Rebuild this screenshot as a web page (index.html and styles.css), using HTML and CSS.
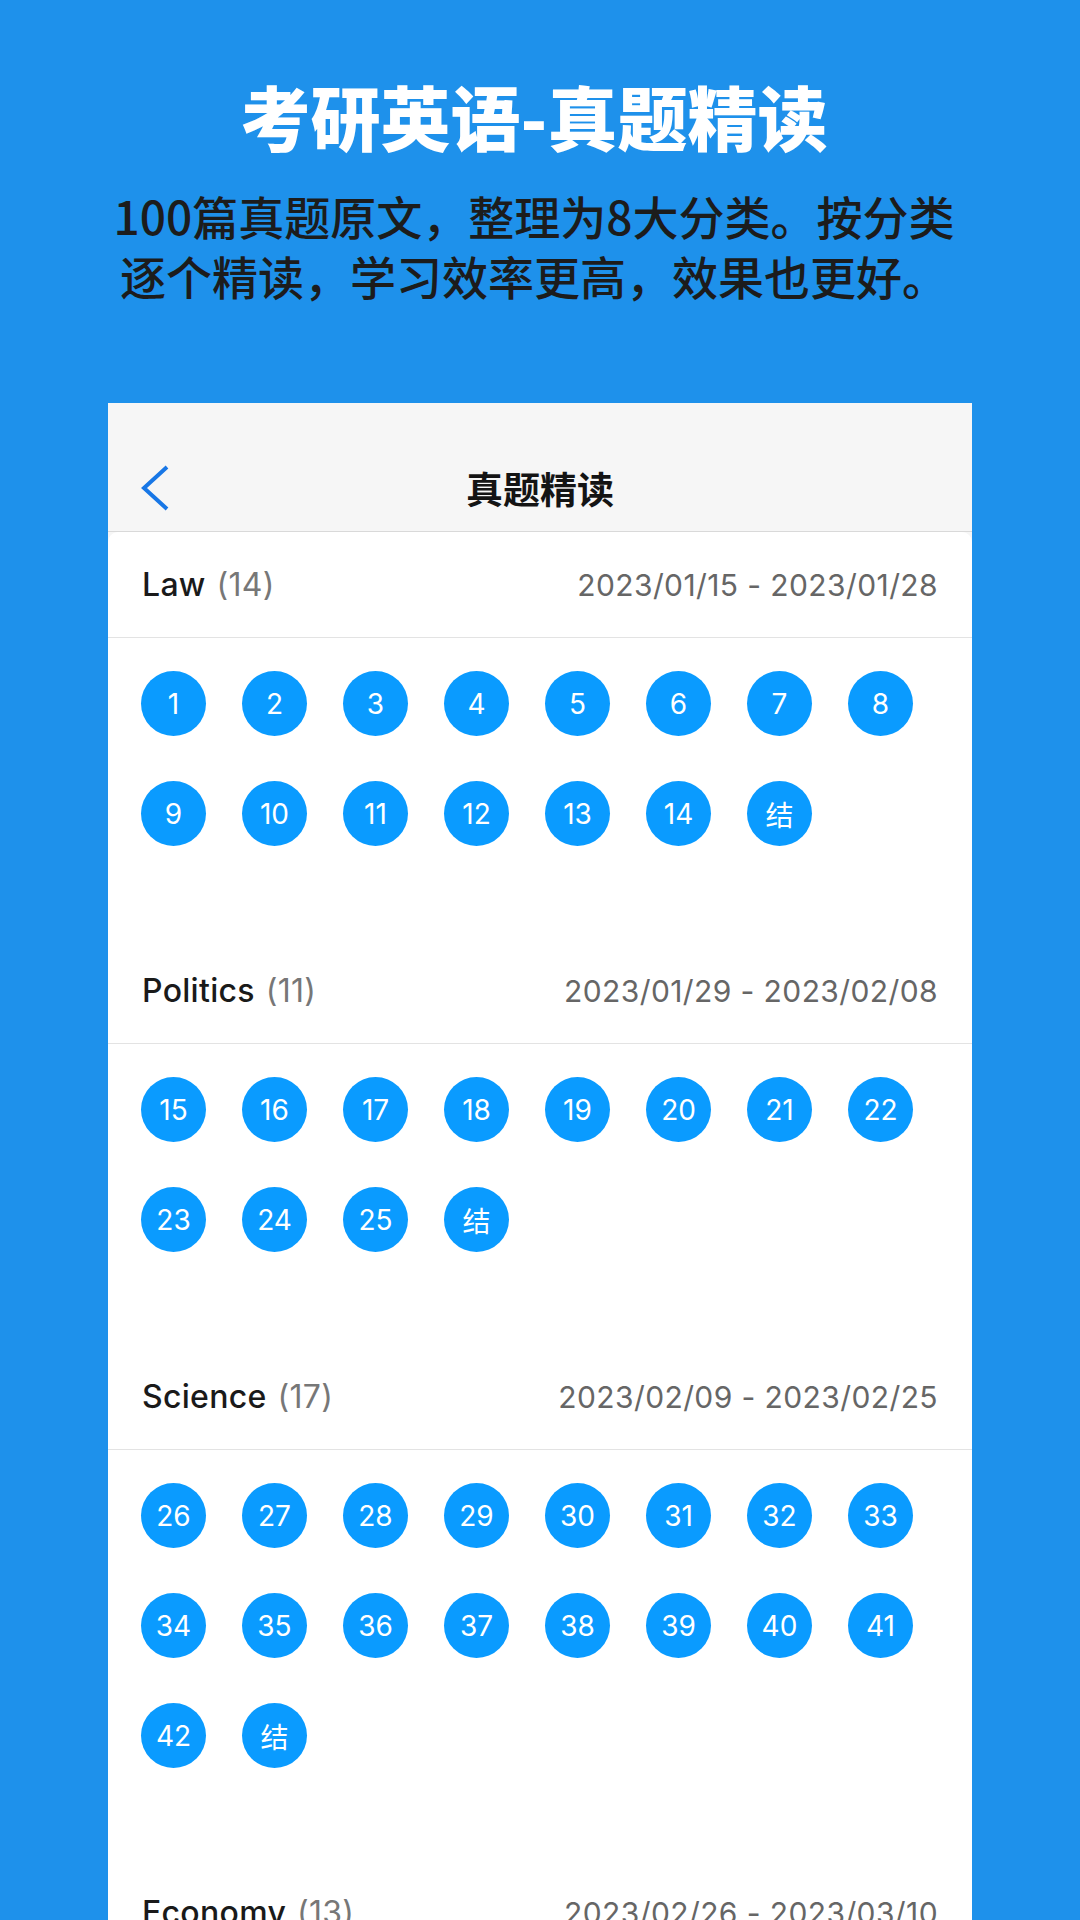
FILE: index.html
```html
<!DOCTYPE html>
<html lang="zh-CN">
<head>
<meta charset="UTF-8">
<title>考研英语-真题精读</title>
<meta name="viewport" content="width=device-width,initial-scale=1">
<link rel="stylesheet" href="styles.css">
</head>
<body>

<header class="promo">
  <h1 class="promo-title">考研英语-真题精读</h1>
  <p class="promo-desc">100篇真题原文，整理为8大分类。按分类<br>逐个精读，学习效率更高，效果也更好。</p>
</header>

<div class="phone">
  <div class="nav">
    <div class="status"></div>
    <div class="nav-bar">
      <svg class="back" width="28" height="46" viewBox="0 0 28 46">
        <polyline points="26,2 3,23 26,44" fill="none" stroke="#1877e6" stroke-width="4"/>
      </svg>
      <span class="nav-title">真题精读</span>
      <span></span>
    </div>
  </div>

  <div class="list">
    <section class="cat">
      <div class="cat-head">
        <span class="cat-name">Law <em>(14)</em></span>
        <span class="cat-date">2023/01/15 - 2023/01/28</span>
      </div>
      <div class="cat-grid">
        <a class="num">1</a><a class="num">2</a><a class="num">3</a><a class="num">4</a>
        <a class="num">5</a><a class="num">6</a><a class="num">7</a><a class="num">8</a>
        <a class="num">9</a><a class="num">10</a><a class="num">11</a><a class="num">12</a>
        <a class="num">13</a><a class="num">14</a><a class="num">结</a>
      </div>
    </section>

    <section class="cat">
      <div class="cat-head">
        <span class="cat-name">Politics <em>(11)</em></span>
        <span class="cat-date">2023/01/29 - 2023/02/08</span>
      </div>
      <div class="cat-grid">
        <a class="num">15</a><a class="num">16</a><a class="num">17</a><a class="num">18</a>
        <a class="num">19</a><a class="num">20</a><a class="num">21</a><a class="num">22</a>
        <a class="num">23</a><a class="num">24</a><a class="num">25</a><a class="num">结</a>
      </div>
    </section>

    <section class="cat">
      <div class="cat-head">
        <span class="cat-name">Science <em>(17)</em></span>
        <span class="cat-date">2023/02/09 - 2023/02/25</span>
      </div>
      <div class="cat-grid">
        <a class="num">26</a><a class="num">27</a><a class="num">28</a><a class="num">29</a>
        <a class="num">30</a><a class="num">31</a><a class="num">32</a><a class="num">33</a>
        <a class="num">34</a><a class="num">35</a><a class="num">36</a><a class="num">37</a>
        <a class="num">38</a><a class="num">39</a><a class="num">40</a><a class="num">41</a>
        <a class="num">42</a><a class="num">结</a>
      </div>
    </section>

    <section class="cat">
      <div class="cat-head">
        <span class="cat-name">Economy <em>(13)</em></span>
        <span class="cat-date">2023/02/26 - 2023/03/10</span>
      </div>
      <div class="cat-grid">
        <a class="num">43</a><a class="num">44</a><a class="num">45</a><a class="num">46</a>
        <a class="num">47</a><a class="num">48</a><a class="num">49</a><a class="num">50</a>
        <a class="num">51</a><a class="num">52</a><a class="num">53</a><a class="num">54</a>
        <a class="num">55</a><a class="num">结</a>
      </div>
    </section>
  </div>
</div>

</body>
</html>
```

FILE: styles.css
```css
body {
  margin: 0;
  background: #1e91eb;
  font-family: "Inter", "Noto Sans CJK SC", sans-serif;
  overflow: hidden;
}

/* top promo text */
.promo {
  padding: 71px 12px 98px 0;
  text-align: center;
  font-family: "Noto Sans CJK SC", sans-serif;
}
.promo-title {
  margin: 0;
  font-size: 70px;
  line-height: 90px;
  font-weight: 900;
  color: #fff;
}
.promo-desc {
  margin: 24px 0 0;
  font-size: 46px;
  line-height: 60px;
  font-weight: 500;
  color: #1c1c1c;
}

/* phone frame */
.phone {
  width: 864px;
  margin: 0 auto;
  background: #f6f6f6;
  min-height: 1600px;
}
.nav {
  border-bottom: 1px solid #d9d9d9;
}
.status {
  height: 42px;
}
.nav-bar {
  height: 86px;
  display: grid;
  grid-template-columns: 1fr auto 1fr;
  align-items: center;
}
.back {
  display: block;
  margin-left: 33px;
}
.nav-title {
  font-family: "Noto Sans CJK SC", sans-serif;
  font-size: 37px;
  font-weight: 700;
  color: #141414;
}

.list {
  background: #fff;
  border-radius: 10px 10px 0 0;
}
.cat-head {
  height: 105px;
  padding: 0 34px;
  display: flex;
  align-items: center;
  justify-content: space-between;
  border-bottom: 1px solid #e3e3e3;
}
.cat-name {
  font-size: 32px;
  font-weight: 500;
  letter-spacing: 0.3px;
  color: #1a1a1a;
}
.cat-name em {
  font-style: normal;
  font-weight: 400;
  color: #777;
  margin-left: 2px;
}
.cat-date {
  font-size: 30px;
  color: #666;
  letter-spacing: 0.4px;
}
.cat-grid {
  padding: 33px 33px 92px;
  display: grid;
  grid-template-columns: repeat(8, 65px);
  grid-auto-rows: 65px;
  gap: 45px 36px;
}
.num {
  display: flex;
  align-items: center;
  justify-content: center;
  border-radius: 50%;
  background: #0a9bff;
  color: #fff;
  font-size: 28px;
}
```
